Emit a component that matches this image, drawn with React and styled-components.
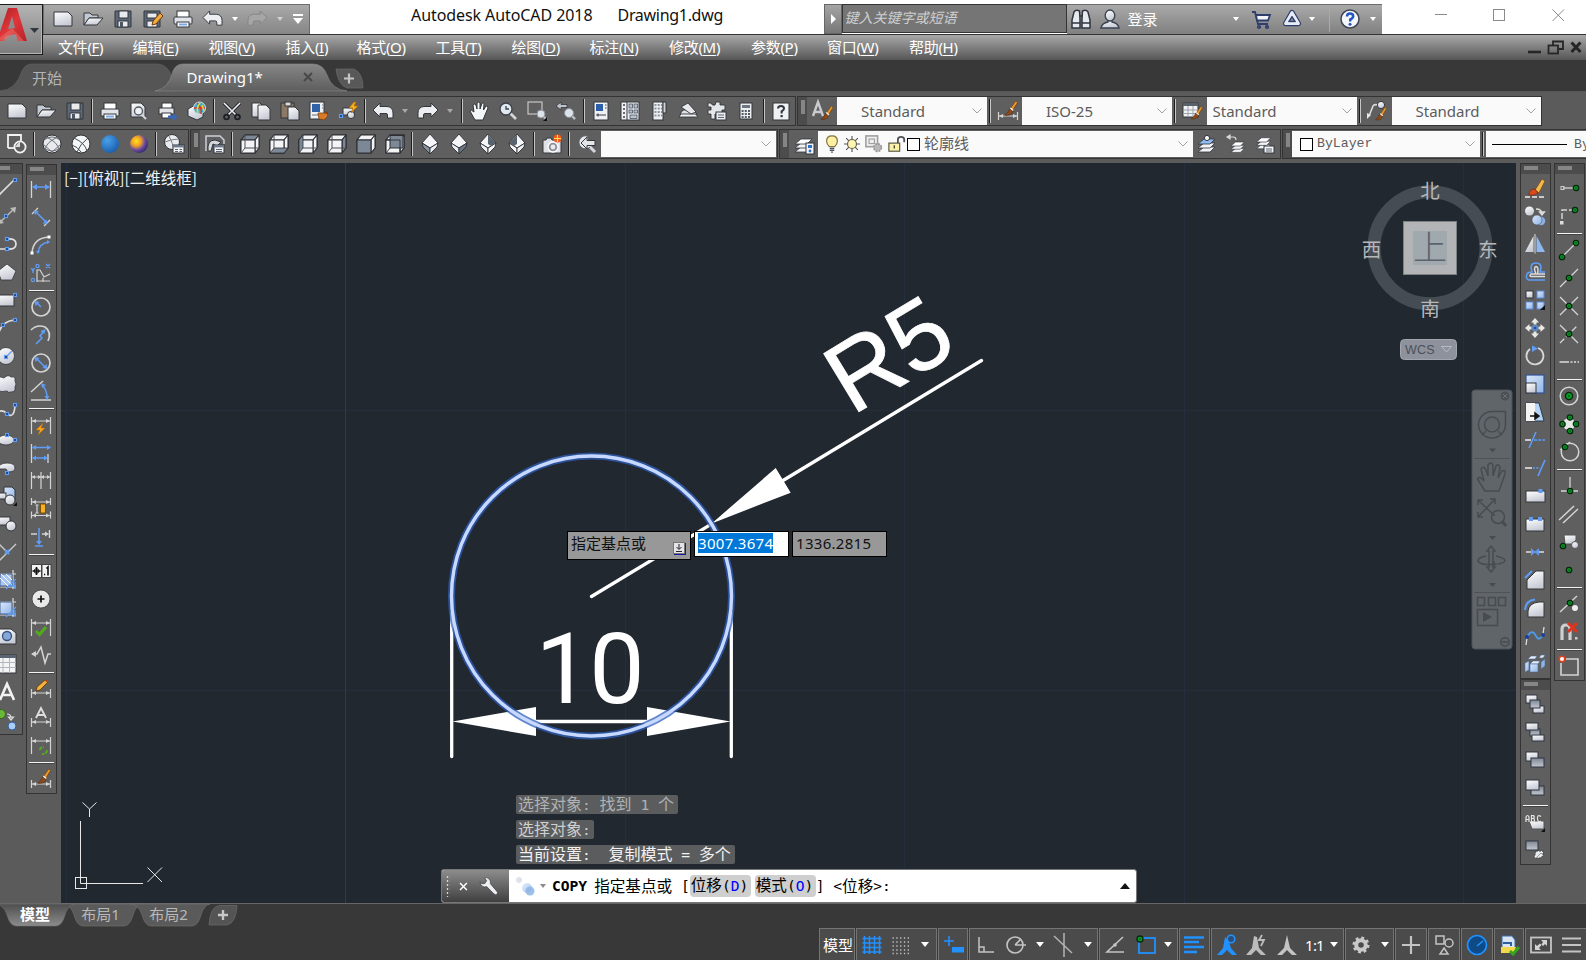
import React from 'react';
import styled, { createGlobalStyle, css } from 'styled-components';

const Global = createGlobalStyle`
  * { box-sizing: border-box; }
  html, body { margin: 0; padding: 0; background: #5b5b5b; overflow: hidden; }
  body { font-family: "Noto Sans", "Noto Sans CJK SC", sans-serif; font-size: 15px; }
`;

const INK = '#33363b';
const LT = '#d4d4d4';
const BL = '#5f9df7';
const PAPER = 'url(#paper)';
const SKY = 'url(#sky)';

const Defs = styled.svg`
  position: absolute;
  width: 0;
  height: 0;
`;

function SharedGradients() {
  return (
    <Defs aria-hidden="true">
      <defs>
        <linearGradient id="paper" x1="0" y1="0" x2="0.4" y2="1">
          <stop offset="0" stopColor="#ffffff" />
          <stop offset="1" stopColor="#c9ccd6" />
        </linearGradient>
        <linearGradient id="sky" x1="0" y1="0" x2="1" y2="1">
          <stop offset="0" stopColor="#dce9fb" />
          <stop offset="1" stopColor="#8fb4e8" />
        </linearGradient>
        <linearGradient id="slate" x1="0" y1="0" x2="0" y2="1">
          <stop offset="0" stopColor="#7e8794" />
          <stop offset="1" stopColor="#c3c8d0" />
        </linearGradient>
        <radialGradient id="blueBall" cx="0.35" cy="0.3" r="0.8">
          <stop offset="0" stopColor="#4aa0e8" />
          <stop offset="1" stopColor="#1559a8" />
        </radialGradient>
        <radialGradient id="goldBall" cx="0.35" cy="0.35" r="0.75">
          <stop offset="0" stopColor="#ffe21a" />
          <stop offset="0.35" stopColor="#f0a028" />
          <stop offset="0.65" stopColor="#6a4a9c" />
          <stop offset="1" stopColor="#22206c" />
        </radialGradient>
        <linearGradient id="logoRed" x1="0" y1="0" x2="1" y2="1">
          <stop offset="0" stopColor="#a51d22" />
          <stop offset="0.5" stopColor="#e2353a" />
          <stop offset="1" stopColor="#b3262b" />
        </linearGradient>
      </defs>
    </Defs>
  );
}

/* ---------- icon parts ---------- */
const Brush = () => (
  <g>
    <path d="M1 1 L8 -9 L10 -7 L4 3z" fill="#e89a2c" stroke="#6b3a10" strokeWidth="0.8" />
    <path d="M1 0 L5 3 Q3 9 -5 8 Q-1 5 1 0z" fill="#8a4a1c" stroke="#4b260c" strokeWidth="0.6" />
    <path d="M1.5 -0.5 L5 2.4" stroke="#eee" strokeWidth="1.6" />
  </g>
);
const Span = ({ y = -4, h = 16, c = LT }) => (
  <g stroke={c} strokeWidth="1.2" fill="none">
    <path d={`M-9.5 ${y - 4} V${y - 4 + h} M9.5 ${y - 4} V${y - 4 + h} M-9 ${y} H9`} />
    <path d={`M-9 ${y} l4 -2 v4z M9 ${y} l-4 -2 v4z`} fill={c} stroke="none" />
  </g>
);
const Dot = ({ x = 0, y = 0, r = 2.7 }) => (
  <g><circle cx={x} cy={y} r={r} fill="#0a9b28" stroke="#06280c" strokeWidth="1.3" /><circle cx={x} cy={y} r="0.8" fill="#073c10" /></g>
);
const Node = ({ x, y }) => <rect x={x - 1.5} y={y - 1.5} width="3" height="3" fill="#24457e" stroke={BL} strokeWidth="1.1" />;
const Page = ({ x = 0, y = 0, w = 10, h = 13 }) => (
  <path d={`M${x} ${y} h${w - 4} l4 4 v${h - 4} h${-w}z`} fill={PAPER} stroke={INK} strokeWidth="1" />
);
const Box = ({ x, y, w, h, f = PAPER, s = '#2e3440' }) => <rect x={x} y={y} width={w} height={h} fill={f} stroke={s} strokeWidth="1" />;
const Layers = ({ top = '#fff' }) => (
  <g stroke={INK} strokeWidth="0.8">
    {[6, 2, -2].map((y) => (
      <path key={y} d={`M-9 ${y + 2} L-3 ${y - 3} H8 L3 ${y + 2}z`} fill={y === -2 ? top : '#f2f3f6'} />
    ))}
  </g>
);
const Zoomer = ({ x = 5, y = 4, r = 4 }) => (
  <g>
    <path d={`M${x + r * 0.6} ${y + r * 0.6} l3.4 3.4`} stroke="#b9bcc4" strokeWidth="2.4" />
    <circle cx={x} cy={y} r={r} fill="#dde3ea" stroke="#8b9097" strokeWidth="1" />
  </g>
);
const cube = (front, top, side) => (
  <g stroke="#2c2f34" strokeWidth="1.1" strokeLinejoin="round">
    <path d="M-9 -4 L-5 -9 H9 V4 L5 9 H-9z" fill="#f4f4f6" />
    <path d="M-9 -4 L-5 -9 H9 L5 -4z" fill={top} />
    <path d="M5 -4 L9 -9 V4 L5 9z" fill={side} />
    <rect x="-9" y="-4" width="14" height="13" fill={front} />
  </g>
);
const CubeLines = () => <path d="M-5 -9 V4 M-5 4 H9 M-5 4 L-9 9" stroke="#4a4e55" strokeWidth="1" fill="none" />;
const iso = (a, b, c) => (
  <g stroke="#2c2f34" strokeWidth="0.9" strokeLinejoin="round">
    <path d="M0 -10 L8 -1 L0 4 L-8 -1z" fill={a} />
    <path d="M-8 -1 L0 4 V10 L-7 3z" fill={b} />
    <path d="M8 -1 L0 4 V10 L7 3z" fill={c} />
  </g>
);
const Undo = ({ c, e = INK }) => (
  <path d="M-10 -1 L-3 -8 V-4.500 H4 Q10 -4 10 2 V7 H4.500 V4 Q4.500 2.500 3 2.500 H-3 V6z" fill={c} stroke={e} strokeWidth="1" />
);
const G = '#2c2f34';
const SL = '#7d8896';

const icons = {
  new: <Page x={-9} y={-7} w={18} h={14} />,
  open: <g stroke={INK}><path d="M-9 6 V-6 H-3 L-1 -4 H5 V-1 H-4z" fill="#c4cad4" /><path d="M-9 6 L-4 -1 H10 L4 6z" fill={PAPER} /></g>,
  save: <g stroke={INK}><path d="M-8 -8 H8 V8 H-8z" fill="#5d6878" /><rect x="-4" y="-8" width="9" height="7" fill="#e9ebef" /><rect x="-5" y="2" width="10" height="6" fill="#e9ebef" /><rect x="-3" y="3" width="3" height="5" fill="#4b5564" stroke="none" /></g>,
  saveas: <g><g stroke={INK}><path d="M-9 -8 H7 V8 H-9z" fill="#5d6878" /><rect x="-6" y="-6" width="10" height="5" fill="#e9ebef" /><rect x="-6" y="2" width="10" height="6" fill="#e9ebef" /></g><path d="M-1 6 L0 2 L7 -6 L10 -3 L3 5z" fill="#f0a93a" stroke="#6b3a10" /></g>,
  print: <g stroke={INK}><rect x="-6" y="-8" width="12" height="7" fill="#fff" /><rect x="-9" y="-2" width="18" height="7" rx="1" fill="#e2e4e9" /><rect x="-6" y="3" width="12" height="5" fill="#fff" /><path d="M-4 5.5 H4" stroke="#7ca9e8" strokeWidth="2" /></g>,
  preview: <g><Page x={-8} y={-8} w={14} h={14} /><path d="M2 3 L7 8" stroke="#d7d9dd" strokeWidth="2" /><circle cx="-0.5" cy="0" r="4" fill="#eef2f6" stroke="#555a62" strokeWidth="1.4" /></g>,
  publish: <g><g stroke={INK}><rect x="-6" y="-8" width="10" height="6" fill="#fff" /><rect x="-9" y="-3" width="15" height="6" fill="#e2e4e9" /><rect x="-6" y="2" width="9" height="5" fill="#fff" /></g><path d="M0 4.500 H5 V2 L10 6 L5 10 V7.500 H0z" fill="#3a66b8" /></g>,
  print3d: <g><path d="M-9 -2 L-2 -6 L6 -1 V6 L0 9 L-9 5z" fill={PAPER} stroke={INK} /><circle cx="2.5" cy="-3" r="6" fill="#37b0d8" stroke="#ddd" /><path d="M0 -8 Q5 -4 4 3 M-3 -3 H8" stroke="#e0352f" strokeWidth="1.5" fill="none" /><path d="M3 -8 Q-1 -3 1 2 M5 -6 L7 0" stroke="#e7d52f" strokeWidth="1.6" fill="none" /></g>,
  cut: <g fill="none"><path d="M-8 -8 L4 4 M8 -8 L-4 4" stroke="#24272c" strokeWidth="3.2" /><path d="M-8 -8 L4 4 M8 -8 L-4 4" stroke="#eceef1" strokeWidth="1.6" /><circle cx="-5.5" cy="6" r="2.4" stroke="#1d1f23" strokeWidth="1.8" /><circle cx="5.5" cy="6" r="2.4" stroke="#1d1f23" strokeWidth="1.8" /></g>,
  copy: <g><Page x={-9} y={-8} w={12} h={14} /><Page x={-3} y={-6} w={12} h={15} /></g>,
  paste: <g><rect x="-9" y="-8" width="13" height="15" fill="#8d7a66" stroke={INK} /><rect x="-5" y="-9" width="6" height="4" fill="#d8d8da" stroke={INK} /><Page x={-2} y={-4} w={11} h={13} /></g>,
  match: <g><rect x="-9" y="-9" width="14" height="17" fill="#edf0f4" stroke={INK} /><rect x="-7" y="-7" width="8" height="8" fill="#2f62a8" /><path d="M3 -6 H4 M3 -3 H4 M-7 4 H-1" stroke="#67727f" /><path d="M-1 2 L8 2 L9 5 L5 9 L0 8z" fill="#d87a28" stroke="#7a3f10" strokeWidth="0.8" /><path d="M6 2 L8 0 L9 3z" fill="#7a3f10" /></g>,
  block: <g><rect x="-5" y="-3" width="11" height="7" fill={PAPER} stroke={INK} /><circle cx="3" cy="4" r="3.6" fill={PAPER} stroke={INK} /><Node x={-7} y={5} /><path d="M6 -9 L1 -3 H5 L3 2 L10 -5 H6 L8 -9z" fill="#f7b51d" stroke="#b56a08" strokeWidth="0.8" /></g>,
  undo: <Undo c="#eceef2" />,
  redo: <g transform="scale(-1 1)"><Undo c="#eceef2" /></g>,
  redoOff: <g transform="scale(-1 1)"><Undo c="#a6a6a6" e="#858585" /></g>,
  pan: <path d="M-4 9 L-9 0 Q-8 -2 -5 1 L-6 -6 Q-5 -8 -3 -6 L-2 -2 L-2 -8 Q0 -10 1 -8 L1 -2 L3 -8 Q5 -9 5 -7 L4.5 -1 L7 -5 Q9 -6 9 -3 L6 4 L4 9z" fill="#f4f5f7" stroke={INK} strokeWidth="1" />,
  zoomrt: <g><path d="M2 2 L8 8" stroke="#d5d7db" strokeWidth="2.6" /><circle cx="-2" cy="-2" r="6" fill="#e2e8ef" stroke="#3b4048" strokeWidth="1.3" /><path d="M-2 -5 V-2 H1" stroke="#3b4048" strokeWidth="1.3" fill="none" /></g>,
  zoomwin: <g><rect x="-9" y="-9" width="14" height="12" fill="none" stroke="#c6c6c6" strokeWidth="1.2" /><Zoomer x={4} y={3} /><path d="M10 6 V10 H6z" fill="#111" /></g>,
  zoomprev: <g><path d="M-10 -5 L-5 -9 V-6.500 H1 V-3.500 H-5 V-1z" fill="#bfc3ca" stroke={INK} strokeWidth="0.8" /><Zoomer x={3} y={2} r={4.500} /></g>,
  props: <g><rect x="-7" y="-9" width="14" height="18" fill="#eef0f4" stroke={INK} /><rect x="-5" y="-7" width="7" height="7" fill="#2d5fa9" /><path d="M-5 4 H5 M-3 2.5 V5.5 M4 -6 H5.5 M4 -3 H5.5" stroke="#3c424b" strokeWidth="1.2" /></g>,
  design: <g><rect x="-9" y="-9" width="18" height="18" fill="#eef0f4" stroke={INK} /><path d="M-3 -9 V9" stroke={INK} /><path d="M-7 -6 H-5 M-7 -2 H-5 M-7 2 H-5 M-7 6 H-5" stroke="#3c424b" strokeWidth="1.6" /><g fill="#b9c3d0" stroke="#4a515c" strokeWidth="0.8"><rect x="-1" y="-7" width="3.4" height="4" /><rect x="4" y="-7" width="3.4" height="4" /><rect x="-1" y="-1" width="3.4" height="3" /><rect x="4" y="-1" width="3.4" height="3" /><rect x="0" y="4" width="7" height="3.4" /></g></g>,
  palettes: <g><rect x="-6" y="-9" width="10" height="18" fill="#eef0f4" stroke={INK} /><path d="M4 -9 H7 V2 H4z" fill="#cfd3da" stroke={INK} /><g stroke="#8b929c" strokeWidth="1.8" strokeDasharray="2 1.2"><path d="M-4.500 -6 H3 M-4.500 -2.5 H3 M-4.500 1 H3 M-4.500 4.5 H3" /></g></g>,
  sheet: <g stroke={INK} strokeWidth="0.9"><path d="M-9 6 L-6 1 H6 L10 6z" fill="#f2f3f5" /><path d="M-8 3 L-5 -1 H5 L9 3z" fill="#dfe2e7" /><path d="M-7 -4 L0 -8 L8 1 L3 3z" fill="#e8eaee" /></g>,
  markup: <g><path d="M-9 -8 H-6 Q-5 -5 -2 -6 L-1 -9 H3 V-6 H8 V-1 H5 V3 H-2 V8 H-6 V3 H-9 V-1 H-6 V-4 H-9z" fill="#e4e6ea" stroke={INK} strokeWidth="0.9" /><rect x="-1" y="1" width="10" height="8" fill="#eceef2" stroke={INK} /><path d="M1 4 H7 M1 6.500 H7" stroke="#5b6470" /></g>,
  calc: <g><rect x="-6" y="-8" width="12" height="16" fill="#eceef2" stroke={INK} /><rect x="-4" y="-6" width="8" height="3" fill="#6d7683" /><g stroke="#535b67" strokeWidth="1.8" strokeDasharray="2 1.2"><path d="M-4.4 0 H5 M-4.4 3 H5 M-4.4 6 H5" /></g></g>,
  helpbox: <g><rect x="-8" y="-8" width="16" height="17" fill="#f0f1f4" stroke={INK} /><path d="M-3 -2.5 Q-3 -5 0 -5 Q3 -5 3 -2.5 Q3 -1 0.6 0.4 V2.4" stroke="#32363d" strokeWidth="2" fill="none" /><rect x="-0.5" y="4" width="2.2" height="2.2" fill="#32363d" /></g>,
  textstyle: <g><path d="M-9 5 L-4 -9 L1 5 M-7.5 1 H-0.500" stroke="#c9cbd0" strokeWidth="2.4" fill="none" /><g transform="translate(3 2) scale(.8)"><Brush /></g></g>,
  dimstyle: <g><Span y={5} h={8} /><g transform="translate(1 -2.5) scale(.85)"><Brush /></g></g>,
  tablestyle: <g><rect x="-9" y="-8" width="15" height="14" fill="#f2f3f5" stroke={INK} /><rect x="-9" y="-8" width="15" height="3" fill="#59616d" /><path d="M-9 -1 H6 M-9 2.5 H6 M-4 -5 V6 M1 -5 V6" stroke="#9da3ad" /><g transform="translate(3 2) scale(.75)"><Brush /></g></g>,
  mleader: <g><path d="M-8 5 L-4 -5 Q-3 -7 1 -6" stroke="#dadcdf" strokeWidth="1.6" fill="none" /><path d="M-10 8 L-10 2 L-6 4z" fill="#e6e6e6" /><circle cx="4" cy="-6" r="3.6" fill={PAPER} stroke={INK} /><g transform="translate(2 3) scale(.75)"><Brush /></g></g>,
  wire2d: <g><path d="M-9 4 V-9 H4 V-2" fill="none" stroke="#f2f2f2" strokeWidth="1.800" /><path d="M-9 4 H-3" stroke="#f2f2f2" strokeWidth="1.800" /><circle cx="3" cy="3" r="5.600" fill="none" stroke="#f2f2f2" strokeWidth="1.800" /><path d="M-2 3 L3 -3 V3z" fill="#ddd" /></g>,
  wireball: <g fill="none"><circle r="9" fill="#e8eaed" stroke="#2f3237" /><path d="M-8 -4 Q0 -10 8 -4 M-8 4 Q0 10 8 4 M-6 -7 Q6 -2 7 6 M6 -7 Q-6 -2 -7 6 M-9 0 L0 8 L9 0" stroke="#6b7078" /></g>,
  hidball: <g stroke="#2f3237" strokeWidth="1" fill="none"><circle r="9" fill="#f4f5f6" /><path d="M-7 -6 Q4 -1 6 7 M7 -6 Q-1 0 -4 8 M-9 1 Q-3 3 0 8" stroke="#44484f" /></g>,
  blueball: <circle r="9" fill="url(#blueBall)" />,
  goldball: <circle r="9" fill="url(#goldBall)" />,
  vsmgr: <g><circle cx="-2" cy="-2" r="7.5" fill="#e9ebee" stroke="#2f3237" /><path d="M-9 -2 Q-2 -5 5 -5 M-5 -8 Q-1 0 0 5" stroke="#7b8088" fill="none" /><rect x="-1" y="1" width="11" height="8" fill="#f2f4f7" stroke={INK} /><rect x="-1" y="1" width="11" height="2.4" fill="#6a7889" /><path d="M1 5.5 H4 M5.5 5.5 H8 M1 7.5 H4 M5.5 7.5 H8" stroke="#5c6673" /></g>,
  viewmgr: <g><path d="M-9 7 V-8 H5 L9 -4 V0" fill="none" stroke="#ccd0d6" strokeWidth="1.5" /><path d="M-7 7 Q-8 -4 0 -4 L6 -2 L2 2 L-2 0 L-4 7z" fill="#d4d7dc" stroke={INK} /><rect x="-1" y="1" width="10" height="8" fill="#f2f4f7" stroke={INK} /><rect x="-1" y="1" width="10" height="2.4" fill="#6a7889" /><path d="M1 5.5 H7 M1 7.5 H7" stroke="#5c6673" /></g>,
  cubeTop: <g>{cube('#f4f4f6', SL, '#f4f4f6')}<CubeLines /></g>,
  cubeBottom: <g>{cube('#f4f4f6', '#f4f4f6', '#f4f4f6')}<path d="M-9 9 L-5 4 H9 L5 9z" fill={SL} stroke={G} strokeWidth="0.8" /><path d="M-5 -9 V4" stroke="#4a4e55" /></g>,
  cubeLeft: <g>{cube('#f4f4f6', '#f4f4f6', '#f4f4f6')}<path d="M-9 -4 L-5 -9 V4 L-9 9z" fill={SL} stroke={G} strokeWidth="0.8" /><path d="M-5 4 H9" stroke="#4a4e55" /></g>,
  cubeRight: <g>{cube('#f4f4f6', '#f4f4f6', SL)}<CubeLines /></g>,
  cubeFront: cube(SL, '#f4f4f6', '#f4f4f6'),
  cubeBack: <g>{cube('#f4f4f6', '#f4f4f6', '#f4f4f6')}<rect x="-5" y="-8.5" width="13" height="12.5" fill={SL} stroke={G} /><path d="M-9 -4 H5 V9 M-9 9 L-5 4" stroke="#33373e" fill="none" /></g>,
  isoSW: iso('#f6f6f8', '#8893a0', '#eceef0'),
  isoSE: iso('#f6f6f8', '#eceef0', '#6c7683'),
  isoNE: <g>{iso('#f6f6f8', '#eceef0', '#f6f6f8')}<path d="M0 -9.500 L7.500 -1 L3 2 L0 0z" fill="#59636f" /></g>,
  isoNW: <g>{iso('#f6f6f8', '#f6f6f8', '#eceef0')}<path d="M0 -9.500 L-7.500 -1 L-3 2 L0 0z" fill="#59636f" /></g>,
  camera: <g><path d="M-9 -4 H-6 L-5 -6 H-1 L0 -4 H9 V9 H-9z" fill="#dfe1e5" stroke={INK} /><circle cx="1" cy="3" r="5" fill="#8b929c" stroke="#fff" strokeWidth="1.3" /><circle cx="1" cy="3" r="2.4" fill="#e9ebee" /><circle cx="5.5" cy="-5.5" r="4" fill="#f2581c" /><path d="M5.5 -9 V-2 M2 -5.5 H9" stroke="#ffe14a" strokeWidth="1.1" /></g>,
  layprev: <g><path d="M2 2 L8 8" stroke="#d5d7db" strokeWidth="3" /><path d="M0 -8 A6.500 6.500 0 1 0 3 3" fill="#e8eaed" stroke="#5b6068" /><path d="M-6 -1 L0 -7 V-3.500 H8 V1.500 H0 V5z" fill="#e3e5e9" stroke={INK} /></g>,
  layprops: <g><Layers /><rect x="2" y="-1" width="8" height="11" fill="#f2f4f7" stroke={INK} /><rect x="4" y="1" width="4" height="3" fill="#2f6fd0" /><circle cx="6" cy="7" r="1.4" fill="#2f6fd0" /></g>,
  laycur: <g><Layers top="#8ebcf0" /><circle cx="0" cy="-6" r="2.6" fill="#f5f6f8" stroke={INK} /></g>,
  laymatch: <g><g transform="translate(2 2) scale(.8)"><Layers /></g><path d="M-9 -7 H-3 Q0 -7 0 -4 M-9 -7 l3 -2 v4z" stroke="#d8dade" strokeWidth="1.2" fill="none" /></g>,
  laystate: <g><g transform="translate(-1 -2) scale(.85)"><Layers /></g><rect x="-1" y="2" width="10" height="7" fill="#f2f4f7" stroke={INK} /><path d="M1 5 H7 M1 7 H7" stroke="#5c6673" /></g>,
  bulb: <g><path d="M-3 3 Q-6 0 -6 -3 Q-6 -9 0 -9 Q6 -9 6 -3 Q6 0 3 3z" fill="#fdf0a0" stroke="#7d7440" strokeWidth="1.3" /><path d="M-2.5 5 H2.5 M-2.5 7.2 H2.5 M-1 9 H1" stroke="#4c5058" strokeWidth="1.4" /></g>,
  sun: <g><path d="M0 -9 V9 M-9 0 H9 M-6.5 -6.5 L6.5 6.5 M6.5 -6.5 L-6.5 6.5" stroke="#55585e" strokeWidth="1.3" /><circle r="5" fill="#fdf3b4" stroke="#6b6540" strokeWidth="1.3" /></g>,
  vpfreeze: <g><rect x="-9" y="-9" width="13" height="12" fill="#f0f0f0" stroke="#a0a0a0" strokeWidth="1.800" /><rect x="-5.500" y="-5.500" width="6" height="5" fill="none" stroke="#a0a0a0" strokeWidth="1.300" /><circle cx="4" cy="4" r="4.200" fill="#b8b8b8" stroke="#989898" strokeWidth="2" strokeDasharray="2 1.300" /></g>,
  unlock: <g><path d="M1 -1 V-5 Q1 -8 4.5 -8 Q8 -8 8 -5 V-2" fill="none" stroke="#4e5157" strokeWidth="2" /><rect x="-9" y="-1" width="12" height="9" fill="#fbf2a8" stroke="#4b4a3a" strokeWidth="1.2" /><path d="M-3 1.500 V5" stroke="#4b4a3a" strokeWidth="1.500" /></g>,

  line: <g><path d="M-10 9 L7 -8" stroke="#ddd" strokeWidth="1.6" /><Node x={8} y={-8} /></g>,
  xline: <g><path d="M-10 9 L8 -8" stroke="#bdbdbd" strokeWidth="1.4" /><path d="M9 -9 L3 -8 L8 -3z M-9 8 L-3 7 L-8 2z" fill="#bbb" /><Node x={-1} y={0} /></g>,
  pline: <g><path d="M0 -5 Q9 -6 9 0 Q9 6 0 5 H-10" stroke="#e2e2e2" strokeWidth="1.7" fill="none" /><Node x={0} y={-5} /><Node x={0} y={5} /></g>,
  polygon: <path d="M0 -8 L9 -1 L5 8 H-6 L-9 -1z" fill={PAPER} stroke={INK} strokeWidth="0.8" />,
  rect: <g><rect x="-11" y="-5" width="18" height="11" fill={PAPER} stroke={INK} /><Node x={8} y={-5} /></g>,
  arc: <g><path d="M-9 10 Q-8 -6 7 -8" stroke="#ddd" strokeWidth="1.700" fill="none" /><Node x={8} y={-8} /><Node x={-4} y={-3} /></g>,
  circle: <g><circle cx="-1" r="8.500" fill={PAPER} stroke={INK} strokeWidth="0.8" /><path d="M-1 1 L5 -5" stroke={BL} strokeWidth="1.300" /><Node x={-1} y={1} /></g>,
  cloud: <path d="M-10 -6 Q-6 -8 -3 -6 Q1 -10 4 -7 Q9 -8 8 -3 Q10 0 8 3 Q9 8 4 8 Q1 9 0 7 Q-4 8 -10 7z" fill={PAPER} stroke={INK} strokeWidth="0.8" />,
  spline: <g><path d="M-9 0 Q-4 -3 0 2 Q7 7 8 -6" stroke="#ddd" strokeWidth="1.700" fill="none" /><Node x={8} y={-7} /><Node x={0} y={2} /></g>,
  ellipse: <g><ellipse cx="-1" cy="0" rx="8" ry="5" fill={PAPER} stroke={INK} strokeWidth="0.8" /><Node x={0} y={-5} /><Node x={8} y={0} /></g>,
  earc: <g><path d="M-9 1 Q-8 -5 0 -5 Q8 -5 8 0 Q8 4 1 4 L-1 1z" fill={PAPER} stroke={INK} strokeWidth="0.8" /><Node x={0} y={5} /></g>,
  insert: <g><path d="M-3 -9 H5 L8 -6 V4 H-3z" fill={SKY} stroke={INK} /><rect x="-11" y="-3" width="10" height="6" fill={PAPER} stroke={INK} /><circle cx="3" cy="4" r="5" fill={PAPER} stroke={INK} /><path d="M10 6 V10 H6z" fill="#111" /></g>,
  mkblock: <g><rect x="-11" y="-7" width="14" height="8" fill={PAPER} stroke={INK} /><circle cx="4" cy="2" r="5" fill={PAPER} stroke={INK} /></g>,
  point: <g><path d="M-8 -8 L0 0 M9 -8 L-8 9" stroke="#ccc" strokeWidth="1.300" /><path d="M-2 2 L2 -2 M-2 -2 L2 2" stroke={BL} strokeWidth="2" /></g>,
  hatch: <g><path d="M-10 -6 H9 M-10 7 H9 M6 -10 V9" stroke="#ddd" strokeWidth="1.200" /><rect x="-7" y="-6" width="12" height="12" fill="#a9c6f2" stroke="#2b4a7c" strokeWidth="0.800" /><path d="M-7 -2 L1 6 M-6 -6 L5 5 M-1 -6 L5 0" stroke="#fff" /><path d="M-1 9 L9 -1 M8 2 V9 M2 6 H9" stroke={BL} strokeWidth="1.300" /></g>,
  gradient: <g><path d="M-10 -6 H9 M-10 7 H9 M6 -10 V9" stroke="#ddd" strokeWidth="1.200" /><rect x="-7" y="-6" width="12" height="12" fill={SKY} stroke="#2b4a7c" strokeWidth="0.800" /><path d="M-1 9 L9 -1 M8 2 V9 M2 6 H9" stroke={BL} strokeWidth="1.300" /></g>,
  region: <g><path d="M-10 -7 H4 L9 -3 V8 H-10z" fill={PAPER} stroke={INK} /><circle cx="0" cy="0" r="4.500" fill="#86a7d6" stroke="#33507f" strokeWidth="1.300" /></g>,
  table: <g><rect x="-11" y="-9" width="20" height="18" fill="#f3f4f6" stroke={INK} /><rect x="-11" y="-9" width="20" height="3" fill="#5a6473" /><path d="M-11 -1.500 H9 M-11 3.500 H9 M-4 -6 V9 M2.500 -6 V9" stroke="#b0b5be" /></g>,
  mtext: <path d="M-7 8 L0 -8 L7 8 M-4.500 3 H4.500" stroke="#f2f2f2" strokeWidth="2.600" fill="none" />,
  addsel: <g><circle cx="-6" cy="-6" r="4.500" fill="#6ab73c" stroke="#2f6a16" /><path d="M0 -6 Q4 -6 4 -2 M4 0 l-2.500 -3 h5z" stroke="#ddd" strokeWidth="1.200" fill="none" /><circle cx="5" cy="6" r="4" fill="#a9cdf5" stroke="#2f5f9e" /></g>,

  dlinear: <g><path d="M-9.500 -8 V9 M9.500 -8 V9" stroke={LT} strokeWidth="1.300" /><path d="M-8 -2 H8" stroke={BL} strokeWidth="1.500" /><path d="M-9 -2 l5 -3 v6z M9 -2 l-5 -3 v6z" fill={BL} /></g>,
  daligned: <g><path d="M-9 -3 L-3 -9 M3 9 L9 3" stroke={LT} strokeWidth="1.300" /><path d="M-6 -6 L6 6" stroke={BL} strokeWidth="1.500" /><path d="M-7 -6 l5 0 l-4 4z M6.500 6.500 l-5 0 l4 -4z" fill={BL} /></g>,
  darc: <g fill="none"><path d="M-9 8 Q-8 -7 8 -8" stroke={LT} strokeWidth="1.600" /><path d="M-3 8 Q-2 -2 8 -3" stroke={BL} strokeWidth="1.500" /><path d="M-10.500 6.500 h3 v3 h-3z M6.500 -9.500 h3 v3 h-3z" fill="#fff" /><path d="M-5 6 h4 l-2 3z M6 -5 v4 l3 -2z" fill={BL} /></g>,
  dord: <g fill="none"><path d="M-4 9 V-3 H-1 L3 4 L9 1 M-4 8 H9 M2 9 V5" stroke={LT} strokeWidth="1.200" /><path d="M-9.500 -5 L-8 -2 L-6.500 -5 M-8 -2 V0 M5 -9 L9 -5 M9 -9 L5 -5" stroke={BL} strokeWidth="1.400" /><circle cx="-3.500" cy="-7" r="1.600" stroke={BL} strokeWidth="1.200" /><circle cx="-8" cy="7" r="1.600" stroke={BL} strokeWidth="1.200" /></g>,
  dradius: <g fill="none"><circle r="9" stroke={LT} strokeWidth="1.700" /><path d="M0 0 L-5 -5" stroke={BL} strokeWidth="1.500" /><path d="M-6.500 -6 l5 1 l-4 4z" fill={BL} /></g>,
  djog: <g fill="none"><path d="M-10 -5 Q-4 -11 4 -8 Q11 -3 7 6" stroke={LT} strokeWidth="1.700" /><path d="M-5 9 L1 3 L-1 1 L3 -4" stroke={BL} strokeWidth="1.600" /><path d="M4.500 -6 l-5 2 l4 3z" fill={BL} /></g>,
  ddia: <g fill="none"><circle r="9" stroke={LT} strokeWidth="1.700" /><path d="M-5 -5 L5 5" stroke={BL} strokeWidth="1.500" /><path d="M-6.500 -6 l5 1 l-4 4z M6.500 6 l-5 -1 l4 -4z" fill={BL} /></g>,
  dang: <g fill="none"><path d="M-10 1 L2 -10 M-10 9 H10" stroke={LT} strokeWidth="1.400" /><path d="M1 -6 Q6 -1 6 6" stroke={BL} strokeWidth="1.500" /><path d="M0 -8 l5 2 l-4 3z M6 9 l-2.500 -4 h5z" fill={BL} /></g>,
  dquick: <g><Span y={-4} h={17} /><path d="M2 -2 L-5 5 H-1 L-3 10 L4 3 H0z" fill="#f9a51b" stroke="#b36a05" strokeWidth="0.500" /></g>,
  dbase: <g><path d="M-9.500 -9 V10 M7 1 V10" stroke={LT} strokeWidth="1.300" /><path d="M-8 -5.500 H9 M-8 5 H6" stroke={BL} strokeWidth="1.400" /><path d="M-9 -5.500 l4 -2.500 v5z M10 -5.500 l-4 -2.500 v5z M-9 5 l4 -2.500 v5z M7 5 l-4 -2.500 v5z" fill={BL} /></g>,
  dcont: <g stroke={LT} strokeWidth="1.200"><path d="M-9.500 -9 V8 M0 -9 V8 M9.500 -9 V8 M-9 -4 H9" /><path d="M-9 -4 l3 -2 v4z M9 -4 l-3 -2 v4z M0 -4 l3 -2 v4z M0 -4 l-3 -2 v4z" fill={LT} stroke="none" /></g>,
  dspace: <g><Span y={-7} h={7} /><Span y={6.500} h={7} /><rect x="-0.500" y="-5" width="5" height="9" fill="#f5b21c" stroke="#7d4e05" /><path d="M-4 -4 V4 M-5.500 -4 h3 M-5.500 4 h3" stroke={LT} strokeWidth="1.200" /></g>,
  dbreak: <g><path d="M-10 -3 H-4 M1 -3 H6 M8.500 -7 V1" stroke={LT} strokeWidth="1.400" /><path d="M8 -3 l-4 -2.500 v5z" fill={LT} /><path d="M-2 -9 V6 M-6 9 H2" stroke={BL} strokeWidth="1.500" /><path d="M-2 8 l-3 -4 h6z" fill={BL} /></g>,
  tol: <g><rect x="-9.500" y="-6.500" width="10" height="13" fill="#f2f2f2" stroke="#444" /><rect x="1" y="-6.500" width="9" height="13" fill="#f2f2f2" stroke="#444" /><path d="M-8.500 0 H-0.500 M-4.500 -4 V4" stroke="#111" strokeWidth="1.600" /><circle cx="-4.500" r="2.300" fill="none" stroke="#111" /><path d="M3 3.500 h1.200 M5.500 -2.500 L7 -4 V4.500" stroke="#111" strokeWidth="1.600" fill="none" /></g>,
  center: <g><circle r="9" fill="#e9e9ea" stroke="#3c3c3c" strokeWidth="0.800" /><path d="M-3.500 0 H3.500 M0 -3.500 V3.500" stroke="#111" strokeWidth="1.700" /></g>,
  dinsp: <g><Span y={-4} h={17} /><path d="M-5 4 L-1.500 7.500 L5 0" stroke="#52ab1d" strokeWidth="3" fill="none" /></g>,
  djogl: <g><path d="M-9 -1 H-4 L0 -8 L4 8 L7 -1 H10" stroke={LT} strokeWidth="1.500" fill="none" /><path d="M-10 -1 l5 -3 v6z" fill={LT} /></g>,
  dedit: <g><Span y={4} h={9} /><path d="M-5 2 L-4 -2 L4 -9 L7 -7 L-1 1z" fill="#f3b23a" stroke="#5a330c" strokeWidth="0.800" /><path d="M4 -9 L7 -7" stroke="#b34d1a" strokeWidth="2" /></g>,
  dtedit: <g><Span y={5} h={9} /><path d="M-5 1 L0 -9 L5 1 M-3 -2 H3" stroke="#ddd" strokeWidth="1.900" fill="none" /></g>,
  dupd: <g><Span y={-4} h={17} /><path d="M-1 5 Q-1 2 3 2 M6 5 Q6 9 1 9" stroke="#52ab1d" strokeWidth="2" fill="none" strokeDasharray="4 1" /></g>,

  erase: <g><path d="M0 2 L7 -9 L10 -7 L4 5z" fill="#f3b94c" stroke="#70420f" strokeWidth="0.700" /><path d="M-6 7 Q-6 1 0 1 L3 5 Q-1 8 -6 7z" fill="#d84a20" stroke="#7a240b" strokeWidth="0.700" /><path d="M-10 9 H10" stroke="#eee" strokeWidth="1.300" strokeDasharray="5 2" /></g>,
  mcopy: <g><circle cx="-5.500" cy="-5" r="4.500" fill={PAPER} /><path d="M1 -7 Q7 -7 7 -2 M7 -1 l-2.500 -3 h5z" stroke="#ddd" strokeWidth="1.300" fill="none" /><circle cx="6" cy="5" r="4.500" fill="#8fb2e6" stroke="#555" strokeWidth="0.500" /><circle cx="2" cy="4" r="5" fill={SKY} stroke="#555" strokeWidth="0.600" /></g>,
  mirror: <g><path d="M-10 8 L-1.500 -8 V8z" fill={PAPER} /><path d="M10 8 L1.500 -8 V8z" fill="#8fb8ee" /><path d="M0 -10 V9.500" stroke="#ddd" strokeWidth="1" /></g>,
  offset: <g fill="none"><path d="M10 8 H-6 Q-10 7 -8 2 Q-7 0 -3 0 Q-6 -9 1 -9 Q8 -9 5 0 H10" stroke={BL} strokeWidth="1.600" /><path d="M10 4.500 H-4 Q-6 4 -4 2 H1 Q-2 -5 1 -5.500 Q4 -5 2.500 2 H10" stroke="#ddd" strokeWidth="1.500" /></g>,
  array: <g><Box x={-9} y={-9} w={7} h={7} /><Box x={2} y={-9} w={7} h={7} f={SKY} s="#5b8ad8" /><Box x={-9} y={2} w={7} h={7} f={SKY} s="#5b8ad8" /><Box x={2} y={2} w={7} h={7} f={SKY} s="#5b8ad8" /><path d="M10 5 V10 H5z" fill="#111" /></g>,
  move: <g fill="#e8e8e8"><path d="M0 -10 L4 -5.500 H1.500 V-3.500 H-1.500 V-5.500 H-4z M0 10 L4 5.500 H1.500 V3.500 H-1.500 V5.500 H-4z M-10 0 L-5.500 -4 V-1.500 H-3.500 V1.500 H-5.500 V4z M10 0 L5.500 -4 V-1.500 H3.500 V1.500 H5.500 V4z" /><rect x="-2" y="-2" width="4" height="4" fill="#2d4e86" stroke={BL} strokeWidth="1.200" /></g>,
  rotate: <g fill="none"><path d="M3 -8 A8.500 8.500 0 1 1 -5 -7" stroke="#d8d8d8" strokeWidth="1.800" /><path d="M-3 -10.500 L3 -7.500 L-3 -4z" fill={BL} /></g>,
  scale: <g><rect x="-9" y="-9" width="18" height="18" fill={SKY} stroke="#2f5496" strokeWidth="1.200" /><rect x="-9" y="-1" width="10" height="10" fill={PAPER} stroke={INK} /></g>,
  stretch: <g><path d="M-9 -9 H4 L9 9 H-9z" fill="#b6d4f6" stroke="#2d3a4e" strokeWidth="1" /><path d="M-9 -9 H0 V9 H-9z" fill="#f4f4f4" /><path d="M-5 4 H0 M4 4 l-4 -3 v6z" stroke="#111" strokeWidth="1.500" fill="#111" /></g>,
  trim: <g><path d="M-10 0 H-4" stroke="#ddd" strokeWidth="1.700" /><path d="M-6 8 L1 -8" stroke={BL} strokeWidth="1.500" /><path d="M-1 0 H10" stroke={BL} strokeWidth="1.500" strokeDasharray="3 1.200" /></g>,
  extend: <g><path d="M-10 0 H-3" stroke="#ddd" strokeWidth="1.700" /><path d="M-2 0 H5" stroke={BL} strokeWidth="1.500" strokeDasharray="2 1.300" /><path d="M3 8 L10 -8" stroke={BL} strokeWidth="1.700" /></g>,
  breakpt: <g><rect x="-9" y="-5" width="19" height="11" fill={PAPER} stroke={INK} /><rect x="3.500" y="-7" width="4" height="4" fill={BL} /></g>,
  brk: <g><path d="M-9 -5 H9 V7 H-9z" fill={PAPER} stroke={INK} /><rect x="-6" y="-7" width="4" height="4" fill={BL} /><rect x="3" y="-7" width="4" height="4" fill={BL} /></g>,
  join: <g><path d="M-9 0 H-3 M3 0 H9" stroke="#ddd" strokeWidth="1.500" /><path d="M-4 -4 L0 0 L-4 4z M4 -4 L0 0 L4 4z" fill={BL} /><path d="M-4 0 H4" stroke={BL} strokeWidth="1.600" /></g>,
  chamfer: <g><path d="M-8 9 V0 L1 -9 H9 V9z" fill={PAPER} stroke={INK} /><path d="M-10 -2 L-3 -9" stroke={BL} strokeWidth="2" /></g>,
  fillet: <g><path d="M-7 9 V3 Q-6 -5 4 -6 H9 V9z" fill={PAPER} stroke={INK} /><path d="M-10 2 Q-9 -8 0 -8.500" stroke={BL} strokeWidth="2" fill="none" /></g>,
  blend: <g fill="none"><path d="M-9 9 L-8 2 M9 -9 L8 -2" stroke="#ddd" strokeWidth="1.300" /><path d="M-8 1 Q-3 -8 1 0 Q4 6 8 -1" stroke="#4c9ae8" strokeWidth="1.800" /><circle cx="-8" cy="1" r="2" fill="#1b3f9c" /><circle cx="8" cy="-1" r="2" fill="#1b3f9c" /></g>,
  explode: <g fill={SKY} stroke="#536d94" strokeWidth="0.600"><path d="M-10 -1 L-6 -3 V6 L-10 8z" /><path d="M-7 -5 L-4 -8 H2 L0 -5z" fill="#e6effc" /><path d="M4 -6 L6 -9 H10 L8 -6z" fill="#e6effc" /><path d="M6 -2 L10 -5 V2 L6 5z" fill="#8fb4e8" /><path d="M-5 0 L-2 -3 H5 L3 0z" fill="#e6effc" /><path d="M-5 0 H3 V8 H-5z" /></g>,
  front: <g><Box x={-9} y={-9} w={11} h={8} /><Box x={-2} y={2} w={11} h={7} /><Box x={-5} y={-4} w={10} h={8} f="url(#slate)" /></g>,
  back: <g><Box x={-5} y={-3} w={10} h={7} f="url(#slate)" /><Box x={-9} y={-9} w={12} h={7} /><Box x={-3} y={3} w={12} h={6} /></g>,
  above: <g><Box x={-9} y={-8} w={12} h={9} /><Box x={-4} y={-2} w={13} h={9} f="url(#slate)" /></g>,
  under: <g><Box x={-4} y={-2} w={13} h={9} f="url(#slate)" /><Box x={-9} y={-8} w={13} h={10} /></g>,
  annfront: <g><path d="M-6 -1 H9 V7 H-3z" fill={PAPER} stroke="#555" /><path d="M-9 0 V-5 Q-7.500 -8 -6 -5 V0 M-9 -2.500 H-6 M-3.500 0 V-6.500 H-1.500 Q0 -5 -1.500 -3.500 H-3.500 M-1.500 -3.500 Q0.500 -2 -1.500 0 H-3.500 M6 -5.500 Q2 -8 2.500 -3 Q3 1 6 -1" stroke="#e4e4e4" strokeWidth="1.200" fill="none" /><path d="M10 6 V10 H6z" fill="#111" /></g>,
  hatback: <g><Box x={-9} y={-9} w={12} h={9} f="url(#slate)" /><path d="M1 1 H8 V6 L5 8 H-1z" fill="#e9eaec" stroke="#444" strokeDasharray="2 1" /><path d="M1 8 L6 3 L8 5" stroke="#999" fill="none" /></g>,

  tmptrk: <g><path d="M-6 0 H5" stroke={LT} strokeWidth="1.300" /><rect x="-8" y="-1.500" width="3" height="3" fill="none" stroke="#ccc" /><Dot x={7} /></g>,
  from: <g><path d="M6 -6 H-7 V5" stroke={LT} strokeWidth="1.500" strokeDasharray="6 2" fill="none" /><rect x="-9" y="5" width="3.500" height="3.500" fill="#ddd" /><Dot x={6} y={-6} /></g>,
  endp: <g><path d="M-6 6 L7 -7" stroke={LT} strokeWidth="1.300" /><Dot x={-7} y={7} /><Dot x={7} y={-7} /></g>,
  midp: <g><path d="M-9 9 L9 -9" stroke={LT} strokeWidth="1.300" /><Dot /></g>,
  intp: <g><path d="M-9 9 L9 -9 M-9 -9 L9 9" stroke={LT} strokeWidth="1.300" /><Dot /></g>,
  appint: <g><path d="M-9 -9 L9 9" stroke={LT} strokeWidth="1.300" /><path d="M-9 9 L9 -9" stroke={LT} strokeWidth="1.300" strokeDasharray="6 2.500" /><Dot /></g>,
  extp: <path d="M-9.500 0 H0 M1.500 0 h2 M5 0 h2 M8.500 0 h1.500" stroke="#ddd" strokeWidth="1.400" />,
  cenp: <g><circle r="8.800" fill="none" stroke={LT} strokeWidth="1.500" /><Dot r={3.600} /></g>,
  quad: <g><circle r="6" fill="#e8e8e8" /><Dot x={1} y={-6.500} /><Dot x={1} y={7} /><Dot x={-6.500} y={0} /><Dot x={7} y={0} /></g>,
  tan: <g><circle r="8.800" cx="1" cy="0" fill="none" stroke={LT} strokeWidth="1.500" /><path d="M-9 -2 L1 -10" stroke={LT} strokeWidth="1.200" /><Dot x={-4} y={-5} /></g>,
  perp: <g><path d="M1 -9 V5 M-8 5 H9" stroke={LT} strokeWidth="1.300" /><Dot x={1} y={5} /></g>,
  para: <path d="M-10 6 L5 -8 M-6 9 L9 -5" stroke={LT} strokeWidth="1.500" />,
  ins: <g><path d="M-5 -7 H7 V-2 L4 2 H-4z" fill={PAPER} stroke="#555" /><circle cx="6" cy="3" r="3.500" fill={PAPER} stroke="#555" /><Dot x={-6} y={4} /></g>,
  nodep: <Dot />,
  near: <g><path d="M-9 8 L8 -8" stroke={LT} strokeWidth="1.400" /><circle cx="6" cy="4" r="3" fill="#eee" /><Dot x={1} y={-1} /></g>,
  none: <g><path d="M-7 8 V-3 Q-7 -7 -3 -7 Q1 -7 1 -3 V8" stroke="#cfcfcf" strokeWidth="3.200" fill="none" /><path d="M-1 -9 L8 0 M8 -9 L-1 0" stroke="#e2341d" strokeWidth="3" /><rect x="6" y="5" width="2.500" height="2.500" fill="#ccc" /></g>,
  osnapset: <g><path d="M-3 -7 H9 V9 H-8 V-3" stroke={LT} strokeWidth="1.600" fill="none" /><circle cx="-7" cy="-7" r="2.800" fill="#fff" stroke="#e0401c" strokeWidth="1.600" /></g>,

  binoc: <g fill="#e6e9ee" stroke="#2f353f" strokeWidth="1.500"><path d="M-7 -7 Q-5 -10 -1.500 -8 L-1 0 V9 H-9 V1z M7 -7 Q5 -10 1.500 -8 L1 0 V9 H9 V1z" /><path d="M-9 4 H-1 M1 4 H9 M-1 -3 H1" /></g>,
  user: <g fill="url(#paper)" stroke="#3a4452" strokeWidth="1.400"><path d="M-9 9 Q-8 4 -2 3 V1 H2 V3 Q8 4 9 9z" /><ellipse cy="-3.500" rx="4.800" ry="5.500" /></g>,
  cart: <g fill="none" stroke="#2e3d6b" strokeWidth="1.800"><path d="M-9 -7 H-6 L-3 5 H7" /><path d="M-5 -4 H9 L7 1.500 H-4z" fill="#f1f3f8" /><circle cx="-2" cy="8" r="1.200" fill="#fff" /><circle cx="6" cy="8" r="1.200" fill="#fff" /></g>,
  a360: <g fill="none" stroke="#2e3d6b" strokeLinejoin="round"><path d="M0 -7 L7 5 H-7z" strokeWidth="6" /><path d="M0 -7 L7 5 H-7z" stroke="#e6ebf6" strokeWidth="3.600" /><path d="M0 -3 L4 3 H-4z" strokeWidth="1" /></g>,
  qhelp: <g><circle r="9" fill="#f4f6fa" stroke="#3e4653" strokeWidth="1.500" /><path d="M-3 -2.500 Q-3 -5.500 0 -5.500 Q3.200 -5.500 3.200 -2.700 Q3.200 -1 0.200 0.600 V2.400" stroke="#2456c4" strokeWidth="2.500" fill="none" /><circle cy="5.300" r="1.500" fill="#2456c4" /></g>,
  wrench: <path d="M-9 -5 Q-9 -2 -6 0 Q-4 1 -2 0 L6 8 Q9 10 9.500 6 L2 -3 Q3 -6 0 -8.500 Q-2 -10 -4 -9 L-2 -6 L-4 -3 L-7 -3z" fill="#f0f0f2" stroke="#40434a" strokeWidth="0.800" />,
  cmdcopy: <g><circle cx="-6" cy="-6" r="3" fill="#dfe3ea" /><circle cx="2" cy="2" r="5" fill="url(#sky)" opacity="0.800" /><circle cx="5" cy="5" r="4.500" fill="#8db4e4" opacity="0.850" /></g>,

  sgrid: <path d="M-7.500 -9 V9 M-2.500 -9 V9 M2.500 -9 V9 M7.500 -9 V9 M-9.500 -6.500 H9.500 M-9.500 -2 H9.500 M-9.500 2.500 H9.500 M-9.500 7 H9.500" stroke="#2191ff" strokeWidth="1.500" />,
  ssnap: <path d="M-8.500 -7 H9 M-8.500 -3 H9 M-8.500 1 H9 M-8.500 5 H9 M-8.500 8.500 H9" stroke="#c4c4c4" strokeWidth="1.300" strokeDasharray="1.300 2.500" />,
  sdyn: <g><path d="M-5 -9 V1 M-10 -4 H0" stroke="#2191ff" strokeWidth="1.600" /><rect x="-2" y="2" width="12" height="5.500" fill="#2191ff" /></g>,
  sortho: <path d="M-7 -8 V7 H8 M-7 2 H-2 V7" stroke="#c4c4c4" strokeWidth="1.500" fill="none" />,
  spolar: <g fill="none" stroke="#c4c4c4" strokeWidth="1.600"><circle cx="-1" r="8" /><path d="M-1 0 H10 M-1 0 L5 -6" /></g>,
  siso: <path d="M-10 -9 L8 8 M0 -12 V12" stroke="#b4b4b4" strokeWidth="1.500" />,
  sotrk: <g><path d="M8 -8 L-8 7 H9" stroke="#c4c4c4" strokeWidth="1.600" fill="none" /><circle r="1.800" fill="#c4c4c4" /></g>,
  sosnap: <g><rect x="-7" y="-7" width="16" height="15" fill="none" stroke="#2191ff" strokeWidth="1.800" /><Dot x={-6} y={-6} r={3} /></g>,
  slwt: <path d="M-10 -7.500 H10 M-10 -3 H5 M-10 2 H10 M-10 7 H3" stroke="#2191ff" strokeWidth="2.700" />,
  sann1: <g fill="#2191ff"><path d="M-2 -8 L2 -3 L4 3 L10 10 L5 10 L0 5 L-5 10 L-10 10 L-4 3z" /><circle cx="4" cy="-6" r="3.800" fill="#2b4f78" stroke="#2191ff" strokeWidth="1.600" /></g>,
  sann2: <g fill="#bcbcbc"><path d="M-2 -9 L1 -8 L3 3 L10 10 L5 10 L0 5 L-5 10 L-10 10 L-4 3z" /><path d="M6 -10 L3 -5 H8 L5 1" stroke="#bcbcbc" strokeWidth="1.800" fill="none" /></g>,
  sann3: <path d="M0 -10 L3 3 L10 10 L5 10 L0 5 L-5 10 L-10 10 L-3 3z" fill="#c4c4c4" />,
  sgear: <g fill="none" stroke="#c8c8c8"><circle r="4.800" strokeWidth="4" /><circle r="7.200" strokeWidth="2.600" strokeDasharray="2.830 2.830" /></g>,
  splus: <path d="M0 -9 V9 M-9 0 H9" stroke="#c4c4c4" strokeWidth="2.200" />,
  siso2: <g fill="none" stroke="#c4c4c4" strokeWidth="1.500"><rect x="-8" y="-9" width="8" height="8" /><circle cx="5" cy="-2" r="4" /><path d="M0 3 L4 9 H-4z" /></g>,
  shw: <g><circle r="9.500" fill="#0d4a86" stroke="#2191ff" strokeWidth="1.700" /><path d="M0 1 L6 -4" stroke="#2191ff" strokeWidth="1.600" /></g>,
  splot: <g><path d="M-7 -9 H3 L6 -5 V3 H-7z" fill="#d9e4f2" stroke="#3d6fae" /><path d="M-8 2 H7 L5 8 H-8z" fill="#f2d84a" /><path d="M-6 -2 H2 V1" stroke="#2d5f9e" strokeWidth="2" fill="none" /><path d="M1 6 L4 9 L10 2" stroke="#35a51e" strokeWidth="3" fill="none" /></g>,
  sfull: <g><rect x="-10" y="-7.500" width="20" height="15" fill="none" stroke="#c4c4c4" strokeWidth="1.800" /><path d="M-6 5 V-1 L-4 1 L-1 -1.500 L0.500 0 L-2 3 L0 5z M6 -5 V1 L4 -1 L2 1 L0.500 -0.500 L2 -3 L0 -5z" fill="#d4d4d4" /></g>,
  smenu: <path d="M-9 -6.500 H10 M-9 0 H10 M-9 6.500 H10" stroke="#c4c4c4" strokeWidth="2" />,
};

const IconSvg = styled.svg`
  display: block;
  flex: none;
  overflow: visible;
  width: ${(p) => p.$size}px;
  height: ${(p) => p.$size}px;
`;
const Icon = ({ name, size = 20 }) => (
  <IconSvg $size={size} viewBox="-10 -10 20 20" aria-hidden="true">{icons[name]}</IconSvg>
);

/* ---------- shell ---------- */
const Shell = styled.div`
  width: 1586px;
  height: 960px;
  display: flex;
  flex-direction: column;
  background: #5b5b5b;
  overflow: hidden;
`;
const Header = styled.header`
  display: grid;
  grid-template-columns: 43px 1fr;
  grid-template-rows: 34px 26px;
  background: #fff;
  flex: none;
`;
const AppButton = styled.button`
  grid-column: 1;
  grid-row: 1 / 3;
  z-index: 1;
  margin: 4px 0 5px;
  padding: 0;
  border: 1px solid #1b1b1b;
  border-width: 1px 1px 1px 0;
  box-shadow: inset -1px -1px 0 #b5b5b5;
  background: linear-gradient(#b4b4b4, #7c7c7c);
`;
const TitleRow = styled.div`
  grid-column: 2;
  grid-row: 1;
  display: flex;
  padding-top: 4px;
`;
const QuickAccess = styled.div`
  width: 267px;
  height: 30px;
  flex: none;
  display: flex;
  align-items: center;
  padding: 0 0 2px 4px;
  border: 1px solid #6d6d6d;
  border-bottom: 0;
  background: linear-gradient(#a9a9a9, #868686);
`;
const Cell = styled.span`
  width: ${(p) => p.$w}px;
  display: flex;
  flex: none;
  align-items: center;
  justify-content: center;
`;
const Caret = styled.i`
  width: 0;
  height: 0;
  flex: none;
  border: ${(p) => p.$s || 3.5}px solid transparent;
  border-top: ${(p) => (p.$s || 3.5) + 1}px solid ${(p) => p.$c || '#fff'};
  border-bottom: 0;
`;
const Customize = styled(Cell)`
  flex-direction: column;
  gap: 2px;
  &::before { content: ''; width: 10px; height: 2px; background: #fff; }
`;
const Title = styled.div`
  width: 514px;
  padding-left: 101px;
  display: flex;
  gap: 24.500px;
  font-size: 16px;
  line-height: 23px;
  color: #111;
  white-space: pre;
`;
const TitleText = styled.span`
  width: ${(p) => p.$w}px;
  letter-spacing: ${(p) => p.$ls}px;
`;
const SearchTab = styled.div`
  width: 18px;
  height: 30px;
  flex: none;
  display: flex;
  align-items: center;
  justify-content: center;
  background: linear-gradient(#a5a5a5, #777);
  border: 1px solid #666;
  &::after { content: ''; border: 5px solid transparent; border-left-color: #fff; border-right: 0; }
`;
const SearchBox = styled.div`
  width: 225px;
  height: 29px;
  flex: none;
  border: 1px solid #343434;
  background: #757575;
  color: #cfcfcf;
  font-size: 14px;
  line-height: 25px;
  padding-left: 1.500px;
  font-style: italic;
`;
const InfoBar = styled.div`
  width: 315px;
  height: 30px;
  flex: none;
  display: flex;
  align-items: center;
  padding-bottom: 2px;
  background: linear-gradient(#a9a9a9, #808080);
  border-top: 1px solid #6d6d6d;
  color: #fff;
  font-size: 15px;
`;
const InfoDivider = styled.span`
  width: 1px;
  height: 26px;
  background: #aaa;
`;
const InfoSpacer = styled.span`
  width: ${(p) => p.$w}px;
  flex: none;
`;
const WindowButtons = styled.div`
  flex: 1;
  height: 22px;
  display: flex;
  padding-left: 30px;
`;
const MenuBar = styled.nav`
  grid-column: 1 / 3;
  grid-row: 2;
  display: flex;
  padding-left: 58px;
  border-top: 1px solid #333;
  background: linear-gradient(#a8a8a8, #565656);
  color: #fff;
  font-size: 15px;
  line-height: 25px;
`;
const MenuItem = styled.span`
  width: ${(p) => p.$w}px;
  flex: none;
  white-space: nowrap;
  letter-spacing: -0.300px;
  u { text-underline-offset: 2px; }
`;
const DocButtons = styled.div`
  margin-left: auto;
  padding-right: 3px;
  display: flex;
  align-items: center;
`;

/* ---------- document tabs ---------- */
const FileTabs = styled.div`
  height: 32px;
  flex: none;
  display: flex;
  align-items: flex-end;
  background: #383838;
  border-bottom: 1px solid #565656;
`;
const FileTab = styled.div`
  position: relative;
  height: 28px;
  width: ${(p) => p.$w}px;
  margin-left: ${(p) => p.$ml}px;
  padding-left: ${(p) => p.$pl}px;
  display: flex;
  align-items: center;
  gap: 40px;
  color: ${(p) => (p.$active ? '#fff' : '#b4b4b4')};
  z-index: ${(p) => (p.$active ? 1 : 0)};
`;
const TabShape = styled.svg`
  position: absolute;
  inset: 0;
  width: 100%;
  height: 100%;
  z-index: -1;
  overflow: visible;
`;

/* ---------- toolbars ---------- */
const ToolRow = styled.div`
  flex: none;
  height: ${(p) => p.$h}px;
  margin-top: ${(p) => p.$mt}px;
  display: flex;
  gap: ${(p) => p.$gap || 0}px;
  width: 1640px;
`;
const Bar = styled.div`
  display: flex;
  align-items: center;
  border: 1px solid #333;
  ${(p) => p.$open && css`border-left: 0;`}
  background: #5f5f5f;
  padding-left: ${(p) => p.$pl || 0}px;
  width: ${(p) => p.$w}px;
  flex: none;
`;
const Sep = styled.span`
  width: 6px;
  height: 24px;
  flex: none;
  &::before {
    content: '';
    display: block;
    width: 2px;
    height: 100%;
    margin-left: 2px;
    background: linear-gradient(90deg, #1d1d1d 50%, #c6c6c6 50%);
  }
`;
const Grip = styled.span`
  width: 9px;
  align-self: stretch;
  flex: none;
  background: #4c4c4c;
  &::before {
    content: '';
    display: block;
    width: 4px;
    height: 14px;
    margin: 3px 0 0 3px;
    background-image: radial-gradient(#aaa 0.6px, #222 1px);
    background-size: 2px 2px;
  }
`;
const Combo = styled.div`
  width: ${(p) => p.$w}px;
  height: ${(p) => p.$h || 28}px;
  flex: none;
  display: flex;
  align-items: center;
  padding: 0 5px 0 ${(p) => p.$pl || 0}px;
  background: #fafafa;
  color: #5c5c5c;
  font-size: 15px;
  ${(p) => p.$mono && css`font: 13.2px "Liberation Mono", monospace;`}
`;
const ComboText = styled.span`
  white-space: nowrap;
  line-height: 20px;
  margin-bottom: ${(p) => p.$lift || 0}px;
`;
const ChevronSvg = styled.svg`
  width: 10px;
  height: 6px;
  margin-left: auto;
  flex: none;
`;
const Chevron = () => <ChevronSvg viewBox="0 0 10 6"><path d="M0.500 0.500 L5 5 L9.500 0.500" stroke="#a2a2a2" fill="none" /></ChevronSvg>;
const Swatch = styled.span`
  width: 13px;
  height: 13px;
  border: 1px solid #000;
  background: #fff;
  margin-right: 4px;
  flex: none;
`;
const LineSample = styled.span`
  width: 75px;
  height: 1px;
  background: #000;
  margin-right: 7px;
  flex: none;
`;

/* ---------- workspace ---------- */
const Work = styled.main`
  flex: none;
  height: 740px;
  margin-top: 4px;
  display: flex;
`;
const SideLeft = styled.aside`
  width: 61px;
  display: flex;
  align-items: flex-start;
  gap: 3px;
  overflow: hidden;
`;
const SideRight = styled.aside`
  width: 70px;
  padding-left: 4px;
  display: flex;
  align-items: flex-start;
  gap: 3px;
`;
const Stack = styled.div`
  display: flex;
  flex-direction: column;
`;
const VBar = styled.div`
  width: 31px;
  flex: none;
  display: flex;
  flex-direction: column;
  align-items: center;
  background: #5f5f5f;
  border: 1px solid #333;
  margin-left: ${(p) => p.$ml || 0}px;
  margin-top: ${(p) => p.$mt || 0}px;
`;
const VGrip = styled.span`
  width: 100%;
  height: 10px;
  background: #4c4c4c;
  &::before {
    content: '';
    display: block;
    width: 14px;
    height: 4px;
    margin: 2px 0 0 3px;
    background-image: radial-gradient(#aaa 0.6px, #222 1px);
    background-size: 2px 2px;
  }
`;
const VCell = styled.span`
  height: 28px;
  width: 29px;
  padding-right: 1px;
  display: flex;
  align-items: center;
  justify-content: center;
`;
const VSep = styled.span`
  width: 25px;
  height: 6px;
  background: linear-gradient(transparent 3px, #f4f4f4 3px, #f4f4f4 4px, #444 4px, #444 5px, transparent 5px);
`;
const Canvas = styled.section`
  position: relative;
  width: 1455px;
  height: 740px;
  flex: none;
  background: #212830;
  overflow: hidden;
`;
const Drawing = styled.svg`
  display: block;
`;
const Prompt = styled.div`
  position: absolute;
  left: ${(p) => p.$x}px;
  top: ${(p) => p.$y}px;
  width: ${(p) => p.$w}px;
  height: ${(p) => p.$h}px;
  display: flex;
  align-items: center;
  justify-content: space-between;
  padding: 0 3px;
  border: 1px solid #000;
  background: ${(p) => (p.$edit ? '#fff' : '#989898')};
  color: #111;
  font-size: 15px;
  line-height: 20px;
`;
const PromptText = styled.span`
  margin-top: ${(p) => p.$mt}px;
  letter-spacing: ${(p) => p.$ls || 0}px;
`;
const Selected = styled(PromptText)`
  background: #0078d7;
  color: #fff;
`;
const DownKey = styled.span`
  width: 12px;
  height: 12px;
  margin: 4px 2px 0 0;
  display: flex;
  align-items: center;
  justify-content: center;
  background: #e4e4ea;
  box-shadow: 1px 1px 0 #1a1aa0, inset 0 0 0 1px #777;
`;
const History = styled.div`
  position: absolute;
  left: 455px;
  top: 632px;
  display: flex;
  flex-direction: column;
  align-items: flex-start;
  gap: 6px;
`;
const HistoryLine = styled.div`
  width: ${(p) => p.$w}px;
  height: 19px;
  padding-left: 2px;
  border-radius: 2px;
  background: #5a5c5d;
  color: ${(p) => p.$c};
  font-size: 16px;
  line-height: 18px;
  white-space: pre;
`;
const Mono = styled.span`
  font-family: "DejaVu Sans Mono", monospace;
  font-size: 14.600px;
  font-weight: ${(p) => (p.$bold ? 700 : 400)};
  color: ${(p) => (p.$blue ? '#0000ff' : 'inherit')};
`;
const CommandLine = styled.div`
  position: absolute;
  left: 380px;
  top: 706px;
  width: 696px;
  height: 34px;
  display: flex;
  align-items: center;
  border: 1px solid #777;
  border-radius: 3px;
  background: #fff;
  overflow: hidden;
`;
const CommandTools = styled.div`
  width: 67px;
  height: 100%;
  flex: none;
  display: flex;
  align-items: center;
  background: linear-gradient(#8d8d8d, #3f3f3f);
`;
const CommandGrip = styled.span`
  width: 6px;
  height: 22px;
  margin: 0 9px 0 4px;
  background-image: radial-gradient(#d8d8d8 0.8px, transparent 1.1px);
  background-size: 3px 4px;
`;
const CommandText = styled.div`
  display: flex;
  align-items: center;
  padding-left: 6px;
  font-size: 15.600px;
  line-height: 22px;
  color: #000;
  white-space: pre;
`;
const Option = styled.span`
  height: 22px;
  line-height: 20px;
  padding: 0 1px;
  width: 61px;
  margin-right: ${(p) => p.$mr}px;
  border-radius: 4px;
  background: #cfcfcf;
`;
const Gap = styled.span`
  width: ${(p) => p.$w}px;
`;
const Expand = styled.i`
  margin-left: auto;
  margin-right: 6px;
  border: 5px solid transparent;
  border-bottom: 6px solid #111;
  border-top: 0;
`;

/* ---------- bottom ---------- */
const Footer = styled.footer`
  height: 57px;
  flex: none;
  display: flex;
  flex-direction: column;
  background: #383838;
  border-top: 1px solid #666;
`;
const LayoutTabs = styled.div`
  display: flex;
  height: 23px;
`;
const LayoutTab = styled.div`
  position: relative;
  z-index: ${(p) => (p.$active ? 1 : 0)};
  width: ${(p) => p.$w}px;
  height: 22px;
  margin-right: -3px;
  padding-right: ${(p) => p.$pr || 0}px;
  text-align: center;
  line-height: 20px;
  font-size: 15px;
  font-weight: ${(p) => (p.$active ? 700 : 400)};
  color: ${(p) => (p.$active ? '#fff' : '#b8b8b8')};
`;
const StatusBar = styled.div`
  height: 32px;
  margin-top: 1px;
  margin-left: 819px;
  display: flex;
  gap: 1px;
`;
const Segment = styled.div`
  width: ${(p) => p.$w}px;
  flex: none;
  display: flex;
  align-items: center;
  border: 1px solid #747474;
  border-bottom: 0;
  background: #4b4b4b;
  color: #fff;
  font-size: 15px;
  white-space: nowrap;
`;

function Tools({ list, w = 29 }) {
  return list.map((n, i) => {
    if (n === '|') return <Sep key={i} />;
    if (n === 'v') return <Cell key={i} $w={16.3}><Caret $c="#a9a9a9" $s={3.5} /></Cell>;
    return <Cell key={i} $w={w}><Icon name={n} /></Cell>;
  });
}
const VTools = ({ list }) => list.map((n, i) => (n === '-' ? <VSep key={i} /> : <VCell key={i}><Icon name={n} /></VCell>));

const menus = [
  ['文件', 'F', 74.5], ['编辑', 'E', 76], ['视图', 'V', 77], ['插入', 'I', 71], ['格式', 'O', 79], ['工具', 'T', 76],
  ['绘图', 'D', 78], ['标注', 'N', 79.5], ['修改', 'M', 82], ['参数', 'P', 76], ['窗口', 'W', 82], ['帮助', 'H', 60],
];
const std1 = 'new open save | print preview publish print3d | cut copy paste match block | undo v redo v | pan zoomrt zoomwin zoomprev | props design palettes sheet markup calc | helpbox'.split(' ');
const view2 = '| cubeTop cubeBottom cubeLeft cubeRight cubeFront cubeBack | isoSW isoSE isoNE isoNW | camera | layprev'.split(' ');
const draw = 'line xline pline polygon rect arc circle cloud spline ellipse earc insert mkblock point hatch gradient region table mtext addsel'.split(' ');
const dim = 'dlinear daligned darc dord - dradius djog ddia dang - dquick dbase dcont dspace dbreak - tol center dinsp djogl - dedit dtedit dupd - dimstyle'.split(' ');
const modify = 'erase mcopy mirror offset array move rotate scale stretch trim extend breakpt brk join chamfer fillet blend explode'.split(' ');
const order = 'front back above under - annfront hatback'.split(' ');
const osnap = 'tmptrk from - endp midp intp appint extp - cenp quad tan - perp para ins nodep - near none - osnapset'.split(' ');

function TopHeader() {
  return (
    <Header>
      <AppButton aria-label="Application menu">
        <svg width="42" height="48" viewBox="0 0 42 48">
          <path d="M-3 36 L8 3 H17 L27 36 H18 L16 29 L5 31 L4 36z" fill="url(#logoRed)" />
          <path d="M8 24 L12 11 L15 23z" fill="#8c8c8c" />
          <path d="M-3 35 L12 23 L24 36 H18 L15 28 L4 36z" fill="#e86a66" opacity="0.6" />
          <path d="M30 23 H39 L34.500 28z" fill="#33383f" />
        </svg>
      </AppButton>
      <TitleRow>
        <QuickAccess>
          {['new', 'open', 'save', 'saveas', 'print'].map((n) => <Cell key={n} $w={30}><Icon name={n} /></Cell>)}
          <Cell $w={29}><Icon name="undo" size={19} /></Cell>
          <Cell $w={16}><Caret /></Cell>
          <Cell $w={29}><Icon name="redoOff" size={19} /></Cell>
          <Cell $w={16}><Caret $c="#d0d0d0" /></Cell>
          <Customize $w={20}><Caret $s={5} /></Customize>
        </QuickAccess>
        <Title>
          <TitleText $w={182} $ls={-0.08}>Autodesk AutoCAD 2018</TitleText>
          <TitleText $w={104} $ls={-0.3}>Drawing1.dwg</TitleText>
        </Title>
        <SearchTab />
        <SearchBox>键入关键字或短语</SearchBox>
        <InfoBar>
          <Cell $w={27}><Icon name="binoc" /></Cell>
          <Cell $w={32}><Icon name="user" /></Cell>
          <Cell $w={33}>登录</Cell>
          <InfoSpacer $w={71} />
          <Cell $w={12}><Caret /></Cell>
          <Cell $w={38}><Icon name="cart" /></Cell>
          <Cell $w={23}><Icon name="a360" size={18} /></Cell>
          <InfoSpacer $w={2} />
          <Cell $w={14}><Caret /></Cell>
          <InfoSpacer $w={10} />
          <InfoDivider />
          <Cell $w={40}><Icon name="qhelp" /></Cell>
          <Cell $w={6}><Caret /></Cell>
        </InfoBar>
        <WindowButtons>
          <svg width="174" height="22" viewBox="1412 4 174 22" fill="none" stroke="#8a8a8a" strokeWidth="1">
            <path d="M1435 14.500 H1447 M1552.500 9.500 L1564 21 M1564 9.500 L1552.500 21" />
            <rect x="1493.500" y="9.500" width="11" height="11" />
          </svg>
        </WindowButtons>
      </TitleRow>
      <MenuBar>
        {menus.map(([t, k, w]) => <MenuItem key={k} $w={w}>{t}(<u>{k}</u>)</MenuItem>)}
        <DocButtons>
          <svg width="56" height="18" viewBox="0 0 56 18" fill="none" stroke="#262626">
            <path d="M1 13 H14" strokeWidth="2.600" />
            <path d="M26 6 V2.500 H36 V10 H32" strokeWidth="1.800" />
            <rect x="21.500" y="6.500" width="9.500" height="8" strokeWidth="1.800" />
            <path d="M44.500 3.500 L53.500 13 M53.500 3.500 L44.500 13" strokeWidth="3" />
          </svg>
        </DocButtons>
      </MenuBar>
    </Header>
  );
}

function DocumentTabs() {
  return (
    <FileTabs>
      <FileTab $w={172} $ml={8} $pl={24}>
        <TabShape><path d="M-8 28 Q8 27 14 8 Q17 1 24 1 H150 Q160 2 164 14 L168 28z" fill="#555" stroke="#666" strokeWidth="0.600" /></TabShape>
        开始
      </FileTab>
      <FileTab $active $w={160} $ml={-13} $pl={19.5}>
        <TabShape>
          <defs><linearGradient id="tabOn" x1="0" y1="0" x2="0" y2="1"><stop offset="0" stopColor="#868686" /><stop offset="1" stopColor="#5e5e5e" /></linearGradient></defs>
          <path d="M-12 28 Q2 26 6 8 Q9 1 16 1 H146 Q156 1 160 12 Q165 27 180 28z" fill="url(#tabOn)" stroke="#8d8d8d" strokeWidth="0.600" />
        </TabShape>
        <ComboText>Drawing1*</ComboText>
        <svg width="10" height="10" viewBox="0 0 10 10"><path d="M1 1 L9 9 M9 1 L1 9" stroke="#484848" strokeWidth="2" /></svg>
      </FileTab>
      <FileTab $w={28} $ml={9} $pl={0}>
        <TabShape><path d="M0 6 H18 Q27 10 27 25 H11 Q2 22 0 6z" fill="#585858" stroke="#6c6c6c" strokeWidth="0.700" /><path d="M13 10.500 V20.500 M8 15.500 H18" stroke="#c4c4c4" strokeWidth="2.200" /></TabShape>
      </FileTab>
    </FileTabs>
  );
}

function Toolbars() {
  return (
    <>
      <ToolRow $h={30} $mt={4} $gap={1}>
        <Bar $open $w={796} $pl={2}><Tools list={std1} /></Bar>
        <Bar $w={745}>
          <Grip />
          <Cell $w={30}><Icon name="textstyle" /></Cell>
          <Combo $w={150} $pl={24}><ComboText>Standard</ComboText><Chevron /></Combo>
          <Sep /><Cell $w={29}><Icon name="dimstyle" /></Cell>
          <Combo $w={149.500} $pl={24}><ComboText>ISO-25</ComboText><Chevron /></Combo>
          <Sep /><Cell $w={29}><Icon name="tablestyle" /></Cell>
          <Combo $w={150} $pl={6}><ComboText>Standard</ComboText><Chevron /></Combo>
          <Sep /><Cell $w={29}><Icon name="mleader" /></Cell>
          <Combo $w={149.500} $pl={24}><ComboText>Standard</ComboText><Chevron /></Combo>
        </Bar>
      </ToolRow>
      <ToolRow $h={30} $mt={3} $gap={1}>
        <Bar $open $w={189} $pl={2}><Tools list={['wire2d', '|', 'wireball', 'hidball', 'blueball', 'goldball', '|', 'vsmgr']} /></Bar>
        <Bar $w={588}>
          <Grip />
          <Cell $w={29}><Icon name="viewmgr" /></Cell>
          <Tools list={view2} />
          <Combo $w={175} $h={26}><Chevron /></Combo>
        </Bar>
        <Bar $w={502}>
          <Grip />
          <Cell $w={29}><Icon name="layprops" /></Cell>
          <Combo $w={375} $h={26} $pl={3}>
            <Cell $w={21}><Icon name="bulb" size={18} /></Cell>
            <Cell $w={20}><Icon name="sun" size={18} /></Cell>
            <Cell $w={24}><Icon name="vpfreeze" size={18} /></Cell>
            <Cell $w={21}><Icon name="unlock" size={18} /></Cell>
            <Swatch /><ComboText $lift={3}>轮廓线</ComboText><Chevron />
          </Combo>
          <Tools list={['laycur', 'laymatch', 'laystate']} w={28.8} />
        </Bar>
        <Bar $w={340}>
          <Grip />
          <Combo $w={188} $h={26} $pl={8} $mono><Swatch /><ComboText>ByLayer</ComboText><Chevron /></Combo>
          <Sep />
          <Combo $w={130} $h={26} $pl={6} $mono><LineSample />ByLayer</Combo>
        </Bar>
      </ToolRow>
    </>
  );
}

const CJK = '"Noto Sans CJK SC", sans-serif';

function DrawingArea() {
  return (
    <Drawing width="1455" height="740" viewBox="61 163 1455 740">
      <g stroke="#252e3c" strokeWidth="1">
        <path d="M66.500 163 V903 M625.500 163 V903 M904.500 163 V903 M1184.500 163 V903 M1463.500 163 V903 M61 410.500 H1516 M61 690.500 H1516" />
        <path d="M345.500 163 V903" stroke="#2f3a4c" />
      </g>
      <text x="64" y="184" fill="#f2f2f2" fontFamily={CJK} fontSize="15.500" textLength="133">[−][俯视][二维线框]</text>

      <g stroke="#fff" strokeWidth="3.300" strokeLinecap="round" fill="#fff">
        <path d="M451.700 613 V756.500 M731.300 613 V756.500" />
        <path d="M530 721.500 H655" strokeWidth="3.600" />
        <path d="M591.500 596.500 L711.700 523.900 M783 480.500 L981.500 360.500" />
      </g>
      <path d="M452.500 721.500 L536 707 V736z M730.500 721.500 L647 707 V736z M711.700 523.400 L775.700 468 L790.700 492.700z" fill="#fff" />
      <circle cx="591.500" cy="596" r="140" fill="none" stroke="#2f5fbd" strokeWidth="7" opacity="0.750" />
      <circle cx="591.500" cy="596" r="140" fill="none" stroke="#c8d9ff" strokeWidth="3.400" />
      <text x="535.500" y="703.300" fill="#fff" fontFamily="Roboto, sans-serif" fontSize="98.500" textLength="109">10</text>
      <text transform="translate(852 416) rotate(-31.150)" fill="#fff" fontFamily="Liberation Sans, Arial, sans-serif" fontSize="99" stroke="#fff" strokeWidth="0.800">R5</text>

      <g fill="none" stroke="#e8e8e8" strokeWidth="1">
        <path d="M80.500 821 V883.500 H143" />
        <rect x="75.500" y="877.500" width="11" height="11" />
        <path d="M82.500 802.500 L89.500 809 L96.500 802.500 M89.500 809 V817 M147.500 867.500 L162 882 M162 867.500 L147.500 882" />
      </g>

      <circle cx="1430" cy="247.800" r="56" fill="none" stroke="#454c54" strokeWidth="13" />
      <rect x="1403.500" y="221.500" width="53" height="53" fill="#b2b4b5" stroke="#7d8183" />
      <rect x="1413" y="231" width="34" height="34" fill="#a0a9ad" />
      <g fontFamily={CJK} fontSize="19.500" textAnchor="middle" fill="#b6b8ba">
        <text x="1430" y="198">北</text>
        <text x="1430" y="315.500">南</text>
        <text x="1371.500" y="256.500">西</text>
        <text x="1488" y="256.500">东</text>
        <text x="1430" y="260" fontSize="34" fontWeight="300" fill="#5c636c">上</text>
      </g>
      <rect x="1400.500" y="339.500" width="56" height="20" rx="4" fill="#8e929d" stroke="#a3a6af" />
      <text x="1405" y="354" fontFamily="Liberation Sans, sans-serif" fontSize="12.500" fill="#4c5058" textLength="29.500">WCS</text>
      <path d="M1441.500 346.500 H1451.500 L1446.500 352z" fill="none" stroke="#b9bcc4" />

      <rect x="1472" y="390" width="40" height="259" rx="3" fill="#60656a" stroke="#4e5358" />
      <g fill="none" stroke="#474c52" strokeWidth="1.500">
        <circle cx="1505" cy="396" r="4.500" fill="#4c5156" stroke="none" />
        <path d="M1503 394 l4 4 m0 -4 l-4 4" stroke="#6a6f74" strokeWidth="1" />
        <path d="M1478.500 424.500 A13.500 13.500 0 1 0 1505.500 424.500 V411.500 H1492 A13.500 13.500 0 0 0 1478.500 424.500z" />
        <circle cx="1492" cy="424.500" r="7.500" />
        <path d="M1486 431 L1482 435 M1498 431 L1502 435" />
        <path d="M1474 458.500 H1510 M1474 592.500 H1510" strokeWidth="0.700" />
        <path d="M1485 491 L1477.500 479 Q1479 475 1484 481 L1481 469 Q1484 465 1486 470 L1488 476 L1488 465 Q1491 461 1493 465 L1493 476 L1496 466 Q1499 463 1500 468 L1498 478 L1502 471 Q1506 469 1505 474 L1499 491z" />
        <path d="M1478 500 L1495 516 M1495 499 L1478 517 M1478 505 V500 H1483 M1490 499 H1495 V504 M1478 512 V517 H1483" />
        <circle cx="1498" cy="517" r="6.500" />
        <path d="M1502 521 L1506 526" strokeWidth="3" />
        <path d="M1491 546 L1495 551 H1493 V567 H1495 L1491 572 L1487 567 H1489 V551 H1487z" />
        <path d="M1486 556 Q1477 558 1478 561 Q1481 566 1497 564 M1496 556 Q1505 558 1505 561 Q1504 563 1498 564 M1494 561 V567" />
        <rect x="1477.500" y="597.500" width="7" height="8" /><rect x="1488.500" y="597.500" width="7" height="8" /><rect x="1498.500" y="597.500" width="7" height="8" />
        <rect x="1477.500" y="609.500" width="20" height="16" />
        <circle cx="1505" cy="642" r="4.200" /><path d="M1502 642 h6" />
        <path d="M1483 612 L1492 617 L1483 622z M1489 448.500 h7 l-3.500 4z M1489 536 h7 l-3.500 4z M1489 583 h7 l-3.500 4z" fill="#474c52" stroke="none" />
      </g>
    </Drawing>
  );
}

function CommandWindow() {
  return (
    <>
      <History>
        <HistoryLine $w={162} $c="#b0b2b4">选择对象<Mono>: </Mono>找到<Mono> 1 </Mono>个</HistoryLine>
        <HistoryLine $w={78} $c="#cdcfd0">选择对象<Mono>:</Mono></HistoryLine>
        <HistoryLine $w={219} $c="#f2f2f2">当前设置<Mono>:  </Mono>复制模式<Mono> = </Mono>多个</HistoryLine>
      </History>
      <CommandLine>
        <CommandTools>
          <CommandGrip />
          <svg width="13" height="13" viewBox="0 0 13 13"><path d="M1.500 1.500 L11.500 11.500 M11.500 1.500 L1.500 11.500" stroke="#fff" strokeWidth="2.200" /></svg>
          <Cell $w={41}><Icon name="wrench" size={19} /></Cell>
        </CommandTools>
        <Cell $w={31}><Icon name="cmdcopy" /></Cell>
        <Caret $c="#8a8a8a" $s={3.500} />
        <CommandText>
          <Mono $bold>COPY</Mono><Gap $w={7} />指定基点或<Mono> [</Mono>
          <Option $mr={4}>位移<Mono>(</Mono><Mono $blue>D</Mono><Mono>)</Mono></Option>
          <Option $mr={0}>模式<Mono>(</Mono><Mono $blue>O</Mono><Mono>)</Mono></Option>
          <Mono>] &lt;</Mono>位移<Mono>&gt;:</Mono>
        </CommandText>
        <Expand />
      </CommandLine>
    </>
  );
}

const TabBack = ({ w, active }) => (
  <TabShape>
    {active && <defs><linearGradient id="layOn" x1="0" y1="0" x2="0" y2="1"><stop offset="0" stopColor="#4e4e4e" /><stop offset="1" stopColor="#8c8c8c" /></linearGradient></defs>}
    <path d={`M-4 0 Q4 1 7 11 Q10 22 16 22 H${w - 14} Q${w - 8} 22 ${w - 5} 11 Q${w - 2} 1 ${w + 4} 0z`} fill={active ? 'url(#layOn)' : '#5a5a5a'} stroke="#727272" strokeWidth="0.600" />
  </TabShape>
);

const s = (w, n) => <Cell key={n} $w={w}><Icon name={n} /></Cell>;
const d = (w, k) => <Cell key={k} $w={w}><Caret $s={4} /></Cell>;
const Scale = styled.span`
  letter-spacing: -0.800px;
`;

function Bottom() {
  return (
    <Footer>
      <LayoutTabs>
        <LayoutTab $w={70} $active><TabBack w={70} active />模型</LayoutTab>
        <LayoutTab $w={71} $pr={4}><TabBack w={71} />布局1</LayoutTab>
        <LayoutTab $w={72} $pr={5}><TabBack w={71} />布局2</LayoutTab>
        <LayoutTab $w={38}>
          <TabShape><path d="M5 21 Q6 3 15 1.500 H33 Q32 19 23 21z" fill="#545454" stroke="#6c6c6c" strokeWidth="0.700" /><path d="M19 6 V16 M14 11 H24" stroke="#c8c8c8" strokeWidth="2.400" /></TabShape>
        </LayoutTab>
      </LayoutTabs>
      <StatusBar>
        <Segment $w={36}><Cell $w={36}>模型</Cell></Segment>
        <Segment $w={81}>{s(29, 'sgrid')}{s(29, 'ssnap')}{d(20, 'a')}</Segment>
        <Segment $w={30}>{s(29, 'sdyn')}</Segment>
        <Segment $w={129}>{s(32, 'sortho')}{s(28, 'spolar')}{d(20, 'a')}{s(28, 'siso')}{d(19, 'b')}</Segment>
        <Segment $w={79}>{s(30, 'sotrk')}{s(31, 'sosnap')}{d(14, 'a')}</Segment>
        <Segment $w={31}>{s(28, 'slwt')}</Segment>
        <Segment $w={133}>{s(29, 'sann1')}{s(30, 'sann2')}{s(31, 'sann3')}<Cell $w={25}><Scale>1:1</Scale></Cell>{d(14, 'a')}</Segment>
        <Segment $w={49}>{s(30, 'sgear')}{d(18, 'a')}</Segment>
        <Segment $w={32}>{s(29, 'splus')}</Segment>
        <Segment $w={32}>{s(29, 'siso2')}</Segment>
        <Segment $w={32}>{s(29, 'shw')}</Segment>
        <Segment $w={30}>{s(27, 'splot')}</Segment>
        <Segment $w={70}>{s(30, 'sfull')}{s(30, 'smenu')}</Segment>
      </StatusBar>
    </Footer>
  );
}

export default function App() {
  return (
    <Shell>
      <Global />
      <SharedGradients />
      <TopHeader />
      <DocumentTabs />
      <Toolbars />
      <Work>
        <SideLeft>
          <VBar $ml={-8}><VGrip /><VTools list={draw} /></VBar>
          <VBar $mt={1}><VGrip /><VTools list={dim} /></VBar>
        </SideLeft>
        <Canvas>
          <DrawingArea />
          <Prompt $x={506} $y={368} $w={124} $h={29}>
            <PromptText $mt={-5}>指定基点或</PromptText>
            <DownKey><svg width="8" height="8" viewBox="0 0 8 8"><path d="M4 0 V5 M1.500 3 L4 5.500 L6.500 3 M1 7.500 H7" stroke="#222" fill="none" /></svg></DownKey>
          </Prompt>
          <Prompt $x={633} $y={368} $w={95} $h={26} $edit><Selected $mt={-2} $ls={0.3}>3007.3674</Selected></Prompt>
          <Prompt $x={731} $y={368} $w={95} $h={26}><PromptText $mt={-2} $ls={0.3}>1336.2815</PromptText></Prompt>
          <CommandWindow />
        </Canvas>
        <SideRight>
          <Stack>
            <VBar><VGrip /><VTools list={modify} /></VBar>
            <VBar><VGrip /><VTools list={order} /></VBar>
          </Stack>
          <VBar><VGrip /><VTools list={osnap} /></VBar>
        </SideRight>
      </Work>
      <Bottom />
    </Shell>
  );
}
